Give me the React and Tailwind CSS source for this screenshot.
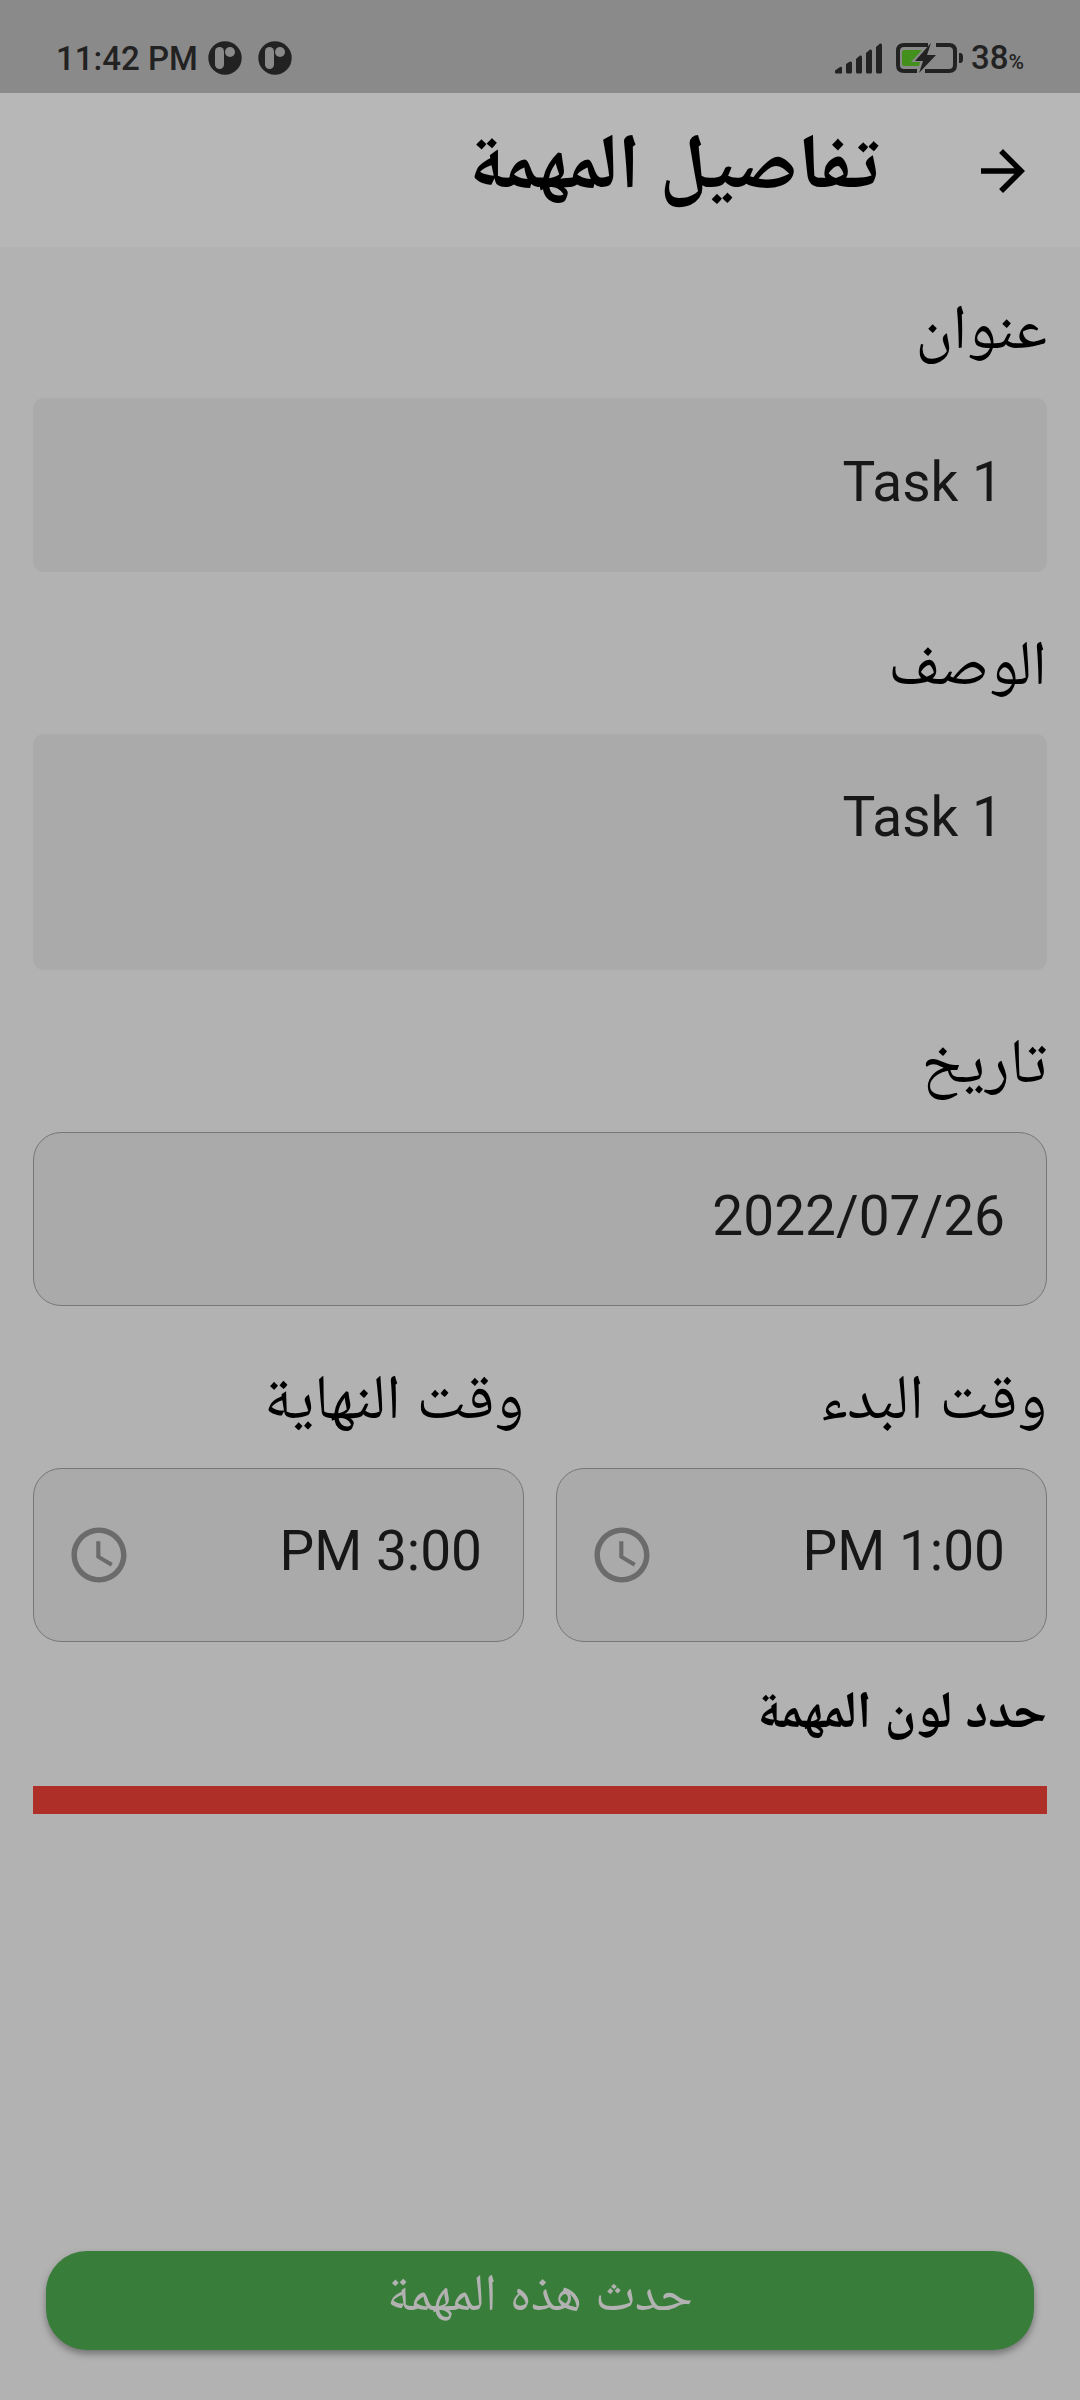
import React from "react";

function NotificationIcon() {
  return (
    <svg viewBox="0 0 34 34" className="size-[34px]" aria-hidden="true">
      <circle cx="17" cy="17" r="16.7" fill="#222222" />
      <rect x="7" y="6" width="9" height="22" rx="4.5" fill="#8a8a8a" />
      <circle cx="22" cy="11" r="5" fill="#8a8a8a" />
    </svg>
  );
}

function SignalIcon() {
  return (
    <svg viewBox="0 0 48 32" className="h-8 w-12" fill="#222222" aria-hidden="true">
      <path d="M0 28.500L5 25Q7 24 7 26V31.500H1Q0 31.500 0 30Z" />
      <path d="M11 22L15 19.500Q17 19 17 21V30Q17 31.500 15.500 31.500H12.500Q11 31.500 11 30Z" />
      <path d="M21 17L25 13.500Q27 13 27 15V30Q27 31.500 25.500 31.500H22.500Q21 31.500 21 30Z" />
      <path d="M31 11L35 7.500Q37 7 37 9V30Q37 31.500 35.500 31.500H32.500Q31 31.500 31 30Z" />
      <path d="M41 5L45 1.500Q47 1 47 3V30Q47 31.500 45.500 31.500H42.500Q41 31.500 41 30Z" />
    </svg>
  );
}

function BatteryIcon() {
  return (
    <svg viewBox="0 0 70 32" className="h-8 w-[70px]" aria-hidden="true">
      <path
        d="M33 3H9Q3 3 3 9V23Q3 29 9 29H22M41 3H54Q60 3 60 9V23Q60 29 54 29H30"
        fill="none"
        stroke="#222222"
        strokeWidth="4"
      />
      <path d="M9 8H27L16 20H25L24 24H9Q7 24 7 22V10Q7 8 9 8Z" fill="#43911c" />
      <path d="M36 1L20 19H28L24 31L41 13H32Z" fill="#222222" />
      <path d="M64 11H66Q68 12 68 14V18Q68 20 66 21H64Z" fill="#222222" />
    </svg>
  );
}

function ClockIcon() {
  return (
    <svg viewBox="0 0 24 24" className="size-[66px] shrink-0" fill="#6b6b6b" aria-hidden="true">
      <path d="M11.990 2C6.470 2 2 6.480 2 12s4.470 10 9.990 10C17.520 22 22 17.520 22 12S17.520 2 11.990 2zM12 20c-4.420 0-8-3.580-8-8s3.580-8 8-8 8 3.580 8 8-3.580 8-8 8zm.5-13H11v6l5.250 3.150.75-1.230-4.500-2.670z" />
    </svg>
  );
}

function Field({ id, label, children }) {
  return (
    <div className="flex min-w-0 flex-col">
      <label htmlFor={id} className="flex h-[162px] items-center pt-5 text-[63px] leading-[80px] text-black">
        {label}
      </label>
      {children}
    </div>
  );
}

function TimeField({ id, label, value }) {
  return (
    <Field id={id} label={label}>
      <div className="flex h-[174px] items-center justify-between rounded-[28px] border border-[#777777] bg-[#aaaaaa] ps-[41px] pe-8">
        <input id={id} type="text" defaultValue={value} className="min-w-0 flex-1 bg-transparent pb-2 text-[55px] leading-[64px] text-[#171717] outline-none" />
        <ClockIcon />
      </div>
    </Field>
  );
}

export default function App() {
  return (
    <div
      dir="rtl"
      lang="ar"
      className="flex min-h-screen w-full flex-col bg-[#b2b2b2] font-[Roboto,'Noto_Naskh_Arabic','DejaVu_Sans',sans-serif]"
    >
      <div dir="ltr" className="flex h-[93px] items-center justify-between bg-[#8a8a8a] px-14 pt-[22px] font-medium text-[#222222]">
        <div className="flex items-center">
          <span className="pt-0.5 text-[33px] leading-10">11:42 PM</span>
          <span className="ml-2.5 flex gap-4">
            <NotificationIcon />
            <NotificationIcon />
          </span>
        </div>
        <div className="flex items-center">
          <SignalIcon />
          <span className="ml-3 flex">
            <BatteryIcon />
          </span>
          <span className="ml-1.5 pt-1 text-[33px] leading-10">
            38<span className="text-[21px]">%</span>
          </span>
        </div>
      </div>

      <header className="flex h-[154px] items-center bg-[#b7b7b7] ps-11">
        <button type="button" aria-label="رجوع" className="flex size-[66px] items-center justify-center pt-0.5">
          <svg viewBox="0 0 24 24" className="size-[66px]" fill="#000000" aria-hidden="true">
            <path d="M12 4l-1.410 1.410L16.170 11H4v2h12.170l-5.580 5.590L12 20l8-8z" />
          </svg>
        </button>
        <h1 className="ms-[91px] pb-4 text-[78px] leading-[100px] font-bold text-black">تفاصيل المهمة</h1>
      </header>

      <form className="flex flex-1 flex-col px-[33px] pb-[50px]" onSubmit={(e) => e.preventDefault()}>
        <div className="-mt-[11px]">
          <Field id="title" label="عنوان">
            <input id="title" type="text" defaultValue="Task 1" className="h-[174px] rounded-[11px] bg-[#aaaaaa] px-11 pb-1.5 text-[55px] leading-[64px] text-[#171717] outline-none" />
          </Field>
        </div>
        <Field id="description" label="الوصف">
          <textarea id="description" defaultValue="Task 1" className="h-[236px] resize-none rounded-[11px] bg-[#aaaaaa] px-11 pt-[51px] text-[55px] leading-[64px] text-[#171717] outline-none" />
        </Field>
        <Field id="date" label="تاريخ">
          <input id="date" type="text" defaultValue="2022/07/26" className="h-[174px] rounded-[28px] border border-[#777777] bg-[#aaaaaa] px-[41px] pb-1.5 text-[55px] leading-[64px] text-[#171717] outline-none" />
        </Field>
        <div className="grid grid-cols-2 gap-8">
          <TimeField id="start" label="وقت البدء" value="1:00 PM" />
          <TimeField id="end" label="وقت النهاية" value="3:00 PM" />
        </div>

        <h2 className="mt-9 text-[52px] leading-[64px] font-bold text-black">حدد لون المهمة</h2>
        <div className="mt-11 h-7 bg-[#ad2f27]" />

        <button type="submit" className="mx-[13px] mt-auto h-[99px] rounded-[41px] bg-[#387e3a] pb-4 text-[52px] leading-[64px] text-[#b2b2b2] shadow-[0_4px_7px_rgba(0,0,0,0.35)]">
          حدث هذه المهمة
        </button>
      </form>
    </div>
  );
}
